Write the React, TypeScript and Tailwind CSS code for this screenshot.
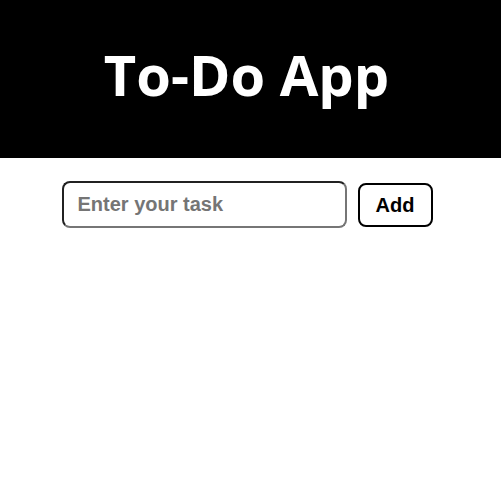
export default function App() {
  return (
    <div className="min-h-screen bg-white">
      <header className="flex h-[158px] items-center justify-center bg-black pb-[10px] pr-2">
        <h1 className="text-[56px] font-bold leading-none text-white [font-family:'Open_Sans',sans-serif]">
          To-Do App
        </h1>
      </header>
      <div className="mt-[23px] flex items-center justify-center gap-[11px] pl-px pr-2 [font-family:'Liberation_Sans',Arial,sans-serif]">
        <input
          type="text"
          placeholder="Enter your task"
          className="h-[47px] w-[285px] rounded-lg border-2 border-[#767676] px-[14px] text-xl font-bold text-black outline-none [border-style:inset] placeholder:text-[#757575]"
        />
        <button className="h-[44px] w-[75px] rounded-lg border-2 border-black bg-white text-xl font-bold text-black">
          Add
        </button>
      </div>
    </div>
  );
}
